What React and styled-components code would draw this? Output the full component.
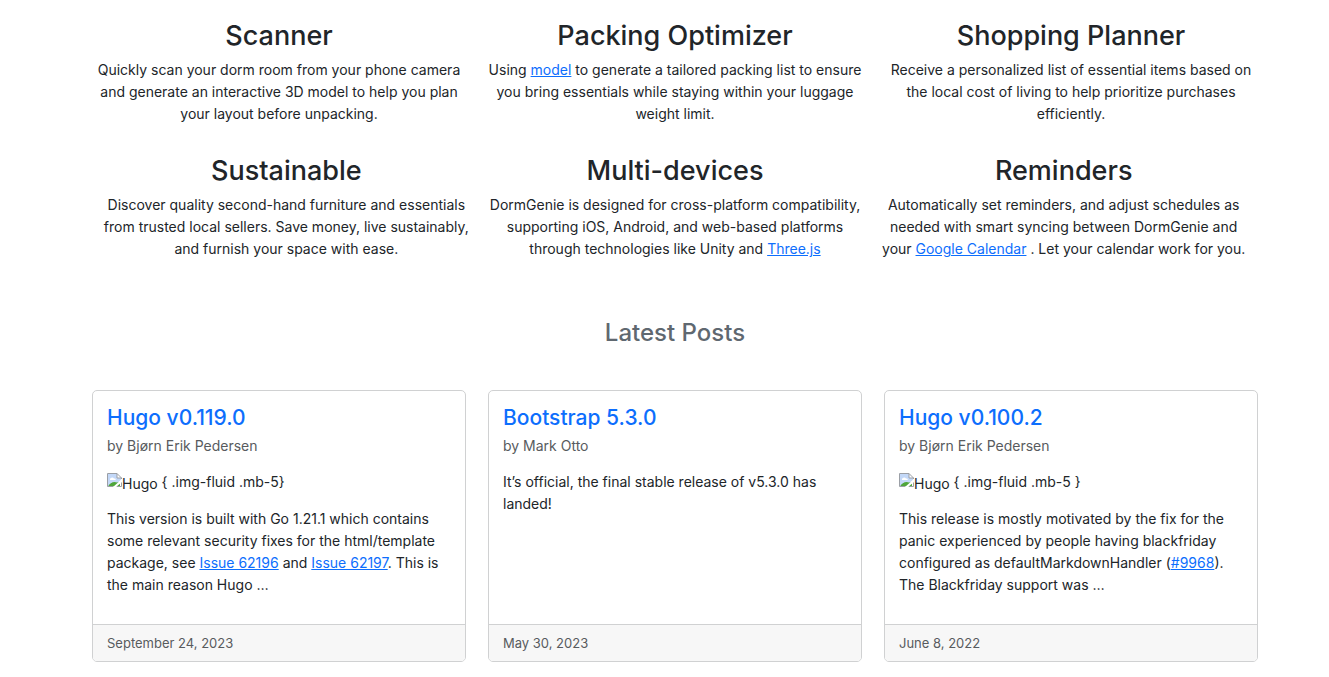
import React from "react";
import styled, { createGlobalStyle } from "styled-components";

const GlobalStyle = createGlobalStyle`
  *, *::before, *::after { box-sizing: border-box; }
  body {
    margin: 0;
    background: #fff;
    color: #212529;
    font-family: Inter, "Liberation Sans", sans-serif;
    font-size: 14px;
    line-height: 22px;
  }
`;

const Page = styled.main`
  padding: 19px 71px 15px 92px;
`;

const FeatureRow = styled.section`
  display: grid;
  grid-template-columns: repeat(3, minmax(0, 1fr));
  column-gap: ${({ $gap }) => $gap}px;
  margin-bottom: 29px;
`;

const Feature = styled.article`
  padding: 0 ${({ $inset }) => $inset}px;
  text-align: center;
`;

const FeatureTitle = styled.h2`
  margin: 0 0 6px;
  font-size: 27px;
  font-weight: 500;
  line-height: 34px;
`;

const Text = styled.p`
  margin: 0 0 ${({ $after }) => $after || 0}px;
`;

const Link = styled.a`
  color: #0d6efd;
  text-decoration: underline;
`;

const SectionTitle = styled.h3`
  margin: 58px 0 42px;
  color: #5f6870;
  font-size: 24px;
  font-weight: 500;
  line-height: 30px;
  text-align: center;
`;

const Posts = styled.section`
  display: grid;
  grid-template-columns: repeat(3, minmax(0, 1fr));
  gap: 22px;
`;

const Card = styled.article`
  display: flex;
  flex-direction: column;
  border: 1px solid #d0d1d2;
  border-radius: 5px;
  overflow: hidden;
`;

const CardBody = styled.div`
  flex: 1;
  padding: 14px 14px 28px;
`;

const CardTitle = styled.h4`
  margin: 0 0 4px;
  font-size: 21px;
  font-weight: 500;
  line-height: 26px;

  a {
    color: #0d6efd;
    text-decoration: none;
  }
`;

const Author = styled.p`
  margin: 0 0 14px;
  color: #585b5e;
`;

const CardFooter = styled.footer`
  padding: 7px 14px;
  border-top: 1px solid #d0d1d2;
  background: #f7f7f7;
  color: #585b5e;
  font-size: 13px;
`;

const MissingImage = styled.span`
  display: inline-flex;
  align-items: flex-start;
  height: 20px;
  vertical-align: top;
  padding-top: 2px;

  svg {
    flex: none;
  }
`;

function BrokenImage({ alt }) {
  return (
    <MissingImage>
      <svg width="15" height="15" viewBox="0 0 15 15" aria-hidden="true">
        <path d="M.5 .5H10L14.500 5V13.500H.5Z" fill="#fff" />
        <path d="M1 1H10V5H14V7L7 13H1Z" fill="#c3d8f8" />
        <path d="M3 6.500C3 4.500 6 3.500 7 5.500C9 5 9.500 7 8 7H3Z" fill="#fff" />
        <path d="M1 13.500C3 9.500 7 8 10 9.500L13 9V13.500Z" fill="#4fa63a" />
        <path d="M15 6L6 14H9L15 9Z" fill="#fff" />
        <path d="M6 13.500H.5V.5H10L14.500 5V6M10 .5V5H14.500M14.500 9.500V13.500H10" fill="none" stroke="#9b9fa6" />
      </svg>
      {alt}
    </MissingImage>
  );
}

const features = [
  {
    gap: 22,
    inset: 0,
    items: [
      { title: "Scanner", text: "Quickly scan your dorm room from your phone camera and generate an interactive 3D model to help you plan your layout before unpacking." },
      { title: "Packing Optimizer", text: <>Using <Link href="#model">model</Link> to generate a tailored packing list to ensure you bring essentials while staying within your luggage weight limit.</> },
      { title: "Shopping Planner", text: "Receive a personalized list of essential items based on the local cost of living to help prioritize purchases efficiently." },
    ],
  },
  {
    gap: 0,
    inset: 8,
    items: [
      { title: "Sustainable", text: "Discover quality second-hand furniture and essentials from trusted local sellers. Save money, live sustainably, and furnish your space with ease." },
      { title: "Multi-devices", text: <>DormGenie is designed for cross-platform compatibility, supporting iOS, Android, and web-based platforms through technologies like Unity and <Link href="#three">Three.js</Link></> },
      { title: "Reminders", text: <>Automatically set reminders, and adjust schedules as needed with smart syncing between DormGenie and your <Link href="#calendar">Google Calendar</Link> . Let your calendar work for you.</> },
    ],
  },
];

const posts = [
  {
    title: "Hugo v0.119.0",
    author: "Bjørn Erik Pedersen",
    date: "September 24, 2023",
    content: (
      <>
        <Text $after={15}><BrokenImage alt="Hugo" /> {"{ .img-fluid .mb-5}"}</Text>
        <Text>This version is built with Go 1.21.1 which contains some relevant security fixes for the html/template package, see <Link href="#62196">Issue 62196</Link> and <Link href="#62197">Issue 62197</Link>. This is the main reason Hugo …</Text>
      </>
    ),
  },
  {
    title: "Bootstrap 5.3.0",
    author: "Mark Otto",
    date: "May 30, 2023",
    content: <Text>It’s official, the final stable release of v5.3.0 has landed!</Text>,
  },
  {
    title: "Hugo v0.100.2",
    author: "Bjørn Erik Pedersen",
    date: "June 8, 2022",
    content: (
      <>
        <Text $after={15}><BrokenImage alt="Hugo" /> {"{ .img-fluid .mb-5 }"}</Text>
        <Text>This release is mostly motivated by the fix for the panic experienced by people having blackfriday configured as defaultMarkdownHandler (<Link href="#9968">#9968</Link>). The Blackfriday support was …</Text>
      </>
    ),
  },
];

export default function App() {
  return (
    <>
      <GlobalStyle />
      <Page>
        {features.map((row) => (
          <FeatureRow key={row.gap} $gap={row.gap}>
            {row.items.map((f) => (
              <Feature key={f.title} $inset={row.inset}>
                <FeatureTitle>{f.title}</FeatureTitle>
                <Text>{f.text}</Text>
              </Feature>
            ))}
          </FeatureRow>
        ))}
        <SectionTitle>Latest Posts</SectionTitle>
        <Posts>
          {posts.map((p) => (
            <Card key={p.title}>
              <CardBody>
                <CardTitle><a href="#post">{p.title}</a></CardTitle>
                <Author>by {p.author}</Author>
                {p.content}
              </CardBody>
              <CardFooter>{p.date}</CardFooter>
            </Card>
          ))}
        </Posts>
      </Page>
    </>
  );
}
